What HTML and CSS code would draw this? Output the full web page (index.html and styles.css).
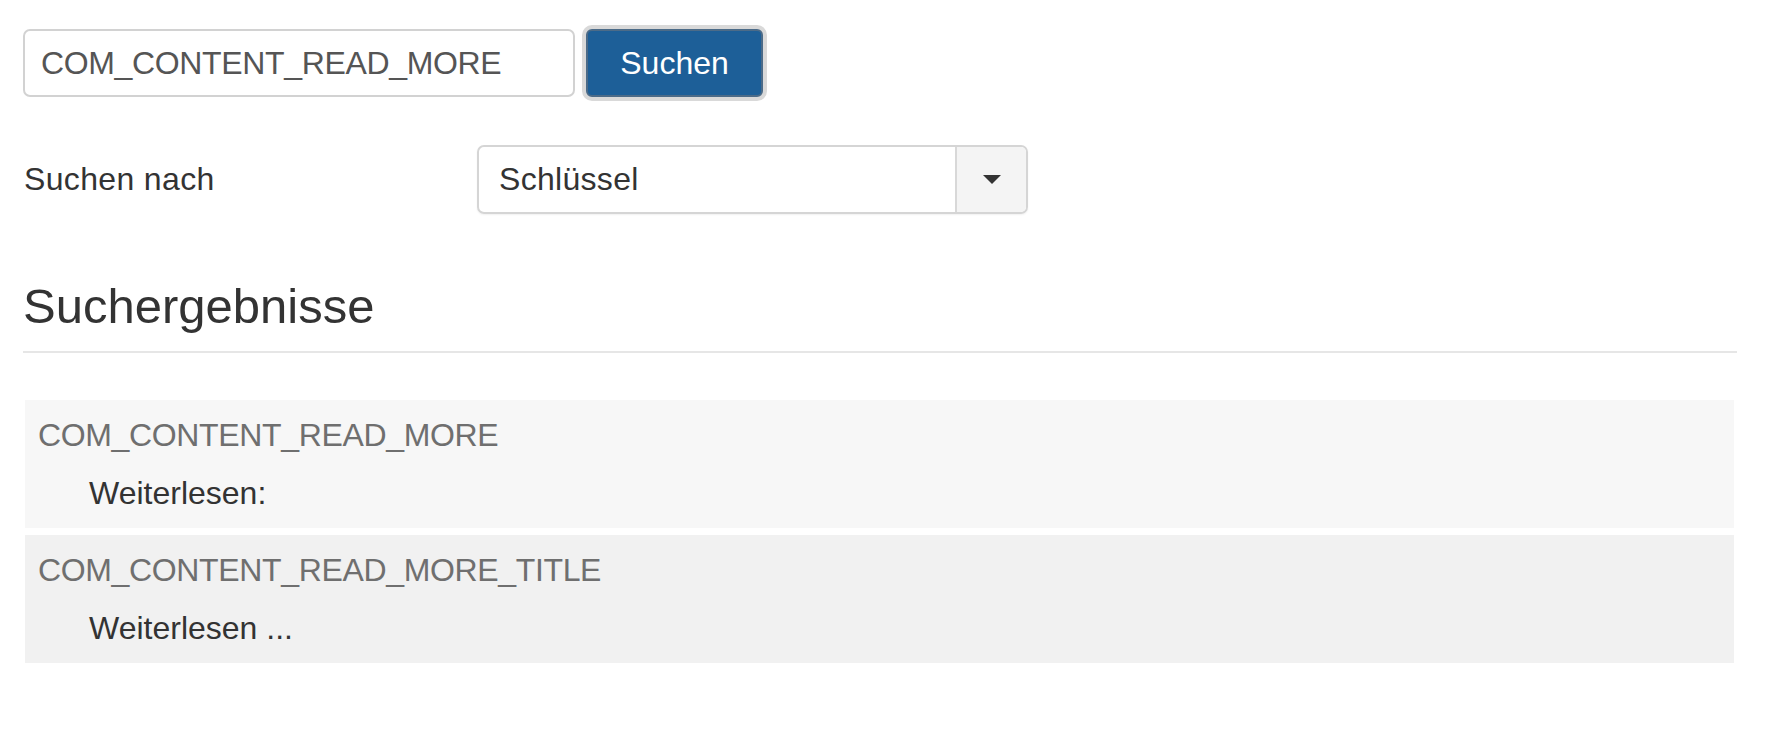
FILE: index.html
```html
<!DOCTYPE html>
<html lang="de">
<head>
<meta charset="utf-8">
<title>Sprachschlüssel suchen</title>
<link rel="stylesheet" href="styles.css">
</head>
<body>
<div class="page">
  <form class="search-form">
    <input class="search-input" type="text" value="COM_CONTENT_READ_MORE">
    <button class="btn-primary" type="button">Suchen</button>
  </form>
  <div class="filter-row">
    <label class="filter-label">Suchen nach</label>
    <div class="select">
      <span class="select-value">Schlüssel</span>
      <span class="select-toggle"><span class="caret"></span></span>
    </div>
  </div>
  <h2 class="results-title">Suchergebnisse</h2>
  <ul class="results">
    <li class="result odd">
      <div class="result-key">COM_CONTENT_READ_MORE</div>
      <div class="result-value">Weiterlesen:</div>
    </li>
    <li class="result even">
      <div class="result-key">COM_CONTENT_READ_MORE_TITLE</div>
      <div class="result-value">Weiterlesen ...</div>
    </li>
  </ul>
</div>
</body>
</html>
```

FILE: styles.css
```css
* { box-sizing: border-box; }
html, body { margin: 0; padding: 0; background: #fff; }
body {
  font-family: "Liberation Sans", Arial, Helvetica, sans-serif;
  font-size: 32px;
  color: #333;
}
.page {
  width: 1737px;
  padding: 29px 0 0 23px;
}
.search-form {
  display: flex;
  align-items: center;
  gap: 11px;
  margin: 0;
}
.search-input {
  width: 552px;
  height: 68px;
  border: 2px solid #d2d2d2;
  border-radius: 7px;
  padding: 0 16px;
  font-family: inherit;
  font-size: 32px;
  letter-spacing: -0.35px;
  color: #555;
  background: #fff;
  outline: none;
}
.btn-primary {
  width: 177px;
  height: 68px;
  border: 2px solid #4c6b88;
  border-radius: 6px;
  background: #1d5f98;
  color: #fff;
  font-family: inherit;
  font-size: 32px;
  padding: 0;
  box-shadow: 0 0 0 4px #d9d9d9;
}
.filter-row {
  display: flex;
  align-items: center;
  margin-top: 48px;
}
.filter-label {
  width: 454px;
  padding-left: 1px;
  letter-spacing: 0.35px;
}
.select {
  display: flex;
  width: 551px;
  height: 69px;
  border: 2px solid #d5d5d5;
  border-radius: 7px;
  overflow: hidden;
  box-shadow: 0 1px 2px rgba(0,0,0,0.06);
}
.select-value {
  flex: 1;
  display: flex;
  align-items: center;
  padding-left: 20px;
  letter-spacing: 0.3px;
  color: #333;
  border-right: 2px solid #d8d8d8;
}
.select-toggle {
  width: 69px;
  background: #f4f4f4;
  display: flex;
  align-items: center;
  justify-content: center;
}
.caret {
  width: 0;
  height: 0;
  border-left: 9px solid transparent;
  border-right: 9px solid transparent;
  border-top: 9px solid #333;
}
.results-title {
  margin: 65px 0 0 0;
  font-size: 49px;
  line-height: 54px;
  font-weight: normal;
  color: #333;
  padding-bottom: 18px;
  border-bottom: 2px solid #e6e6e6;
}
.results {
  list-style: none;
  margin: 47px 0 0 2px;
  padding: 0;
  width: 1709px;
  display: flex;
  flex-direction: column;
  gap: 7px;
}
.result {
  padding: 12px 13px;
  display: flex;
  flex-direction: column;
  gap: 12px;
}
.result.odd { background: #f7f7f7; }
.result.even { background: #f1f1f1; }
.result-key {
  line-height: 46px;
  color: #6f6f6f;
  letter-spacing: -0.35px;
}
.result-value {
  line-height: 46px;
  padding-left: 51px;
  color: #333;
}
```
